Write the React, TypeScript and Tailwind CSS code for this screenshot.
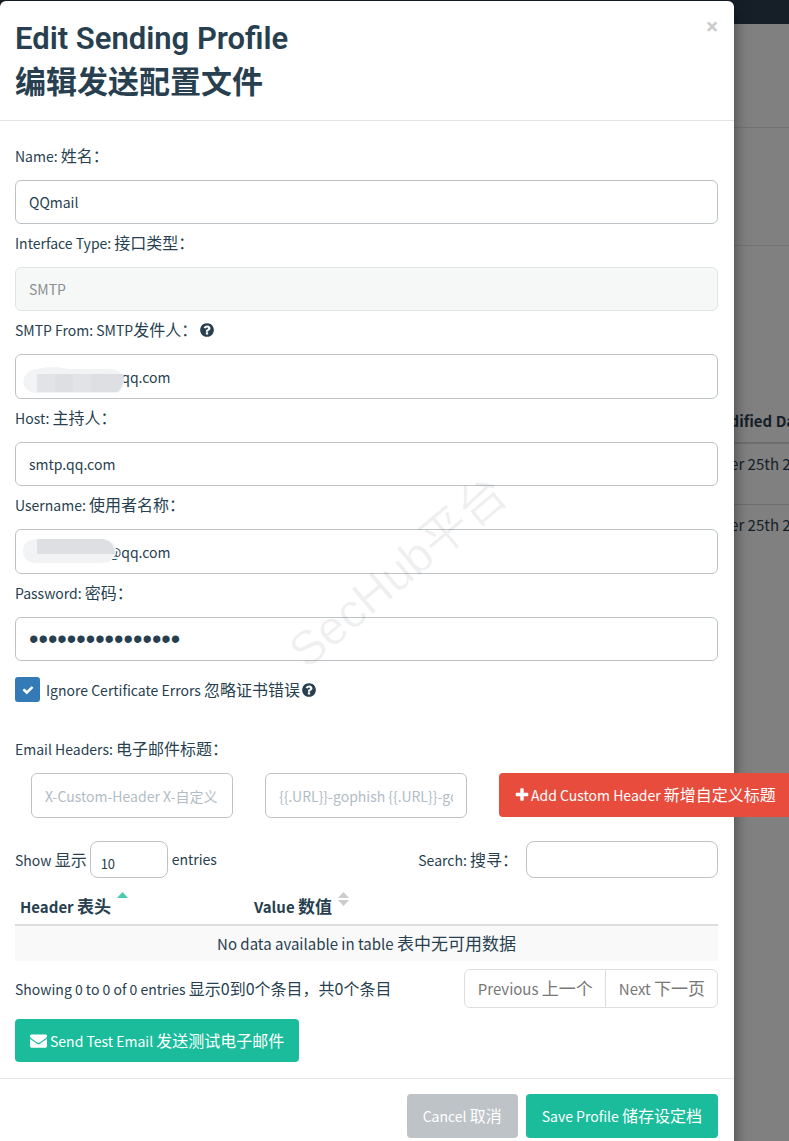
import React, { useState } from 'react'

const iconPaths = {
    plus: "M1600 736v192q0 40-28 68t-68 28h-416v416q0 40-28 68t-68 28H800q-40 0-68-28t-28-68v-416H288q-40 0-68-28t-28-68V736q0-40 28-68t68-28h416V224q0-40 28-68t68-28h192q40 0 68 28t28 68v416h416q40 0 68 28t28 68z",
    check: "M1671 566q0 40-28 68l-724 724-136 136q-28 28-68 28t-68-28l-136-136-362-362q-28-28-28-68t28-68l136-136q28-28 68-28t68 28l294 295 656-657q28-28 68-28t68 28l136 136q28 28 28 68z",
    envelope: "M1792 710v794q0 66-47 113t-113 47H160q-66 0-113-47T0 1504V710q44 49 101 87 362 246 497 345 57 42 92.5 65.5t94.5 48 110 24.5h2q51 0 110-24.5t94.5-48 92.5-65.5q170-123 498-345 57-39 100-87zm0-294q0 79-49 151t-122 123q-376 261-468 325-10 7-42.5 31t-54 38.5-52 32.5-57.5 27-50 9h-2q-23 0-50-9t-57.5-27-52-32.5-54-38.5-42.5-31q-91-64-262-182.5T172 690q-62-42-117-115.5T0 438q0-78 41.5-130T160 256h1472q65 0 112.5 47t47.5 113z",
    question: "M1024 1376v-192q0-14-9-23t-23-9H800q-14 0-23 9t-9 23v192q0 14 9 23t23 9h192q14 0 23-9t9-23zm256-672q0-88-55.5-163t-138.5-116-170-41q-243 0-371 213-15 24 8 42l132 100q7 6 19 6 16 0 25-12 53-68 86-92 34-24 86-24 48 0 85.5 26t37.5 59q0 38-20 61t-68 45q-63 28-115.5 86.5T768 1020v36q0 14 9 23t23 9h192q14 0 23-9t9-23q0-19 21.5-49.5T1100 957q32-18 49-28.5t46-35 44.5-48 28-60.5 12.5-81zm384 192q0 209-103 385.5T1281.5 1561 896 1664t-385.5-103T231 1281.5 128 896t103-385.5T510.5 231 896 128t385.5 103T1561 510.5 1664 896z",
};

const Icon: React.FC<{ name: keyof typeof iconPaths; className: string }> = ({ name, className }) => (
    <svg viewBox="0 0 1792 1792" fill="currentColor" aria-hidden="true" className={`inline-block shrink-0 ${className}`}>
        <path d={iconPaths[name]} />
    </svg>
);

const inputClass = "block w-full rounded-md border border-[#bdc3c7] bg-white px-[13px] text-[14px] text-[#283f50] outline-none placeholder:text-[#b2bcc5] disabled:border-[#dfe4e5] disabled:bg-[#f6f8f8] disabled:text-[#8b8f90]";

// English and Chinese parts run in one line at their own sizes
const Bi: React.FC<{ en: string; zh: string; large?: boolean; tight?: boolean }> = ({ en, zh, large, tight }) => (
    <span className="inline-block whitespace-nowrap pb-0.5">
        <span className={large ? "text-[15px]" : "text-[14px]"}>{en}{tight ? "" : " "}</span>
        <span className={large ? "text-[17px]" : "text-[16px]"}>{zh}</span>
    </span>
);

interface FieldProps {
    id: string;
    en: string;
    zh: string;
    tight?: boolean;
    help?: boolean;
    children: React.ReactNode;
}

const Field: React.FC<FieldProps> = ({ id, en, zh, tight, help, children }) => (
    <div className="mb-[7px]">
        <label htmlFor={id} className="mb-3 flex h-6 items-center leading-6">
            <Bi en={en} zh={zh} tight={tight} />
            {help && <Icon name="question" className="ml-0.5 h-4 w-4" />}
        </label>
        {children}
    </div>
);

const BackgroundPage = () => (
    <div className="absolute inset-0 overflow-hidden bg-[#808080] text-[#161f28]" aria-hidden="true">
        <div className="h-6 bg-[#161f28]" />
        <div className="h-[104px] border-b border-[#737373]" />
        <div className="h-[118px] border-b border-[#737373]" />
        <div className="mt-[155px] flex flex-col">
            <div className="flex h-[43px] justify-end border-b-2 border-[#6e6e6e]">
                <div className="w-[116px] whitespace-nowrap pt-2 text-[15px] font-bold leading-6">Last Modified Date</div>
            </div>
            <div className="flex h-[61px] justify-end border-b border-[#6e6e6e]">
                <div className="w-[118px] whitespace-nowrap pt-2 text-[15px] leading-6">November 25th 2024</div>
            </div>
            <div className="flex h-[61px] justify-end">
                <div className="w-[118px] whitespace-nowrap pt-2 text-[15px] leading-6">November 25th 2024</div>
            </div>
        </div>
    </div>
);

const App: React.FC = () => {
    const [ignoreErrors, setIgnoreErrors] = useState(true);

    return (
        <div className="relative min-h-screen overflow-hidden font-['Noto_Sans_CJK_SC',sans-serif] text-[#283f50]">
            <BackgroundPage />

            {/* Modal */}
            <div role="dialog" aria-labelledby="modal-title" className="relative mr-[55px] mt-px rounded-md bg-white shadow-[0_5px_15px_rgba(0,0,0,0.5)]">
                <div className="flex items-start justify-between border-b border-[#e5e5e5] px-4 pb-[15px] pl-[15px] pt-4">
                    <h4 id="modal-title" className="font-['Roboto','Noto_Sans_CJK_SC',sans-serif] text-[31px] font-semibold leading-[44px]">
                        Edit Sending Profile
                        <br />
                        <span className="font-bold">编辑发送配置文件</span>
                    </h4>
                    <button type="button" aria-label="Close" className="font-['Roboto',sans-serif] text-[22px] font-bold leading-5 text-[#ccc]">×</button>
                </div>

                <div className="pl-[15px] pr-4 pt-[23px]">
                    <Field id="name" en="Name:" zh="姓名：">
                        <input id="name" type="text" defaultValue="QQmail" className={`h-11 ${inputClass}`} />
                    </Field>
                    <Field id="interface" en="Interface Type:" zh="接口类型：">
                        <input id="interface" type="text" value="SMTP" disabled className={`h-11 ${inputClass}`} />
                    </Field>
                    <Field id="from" en="SMTP From: SMTP" zh="发件人：" tight help>
                        <div className="relative">
                            <input id="from" type="text" defaultValue="@qq.com" className={`h-[45px] pl-[92px]! ${inputClass}`} />
                            <svg className="absolute left-2 top-3" width="102" height="28" viewBox="0 0 102 28" aria-hidden="true">
                                <path d="M13 27C-4 26-4 5 14 3Q30-1 46 3H88Q101 5 101 14Q101 26 93 27Z" fill="#f2f3f5" />
                                <path d="M14 8H100Q103 16 95 26H14Z" fill="#dddfe3" />
                                <path d="M14 8H32V26H14ZM50 8H68V26H50Z" fill="#e1e3e6" />
                            </svg>
                        </div>
                    </Field>
                    <Field id="host" en="Host:" zh="主持人：">
                        <input id="host" type="text" defaultValue="smtp.qq.com" className={`h-11 ${inputClass}`} />
                    </Field>
                    <Field id="username" en="Username:" zh="使用者名称：">
                        <div className="relative">
                            <input id="username" type="text" defaultValue="@qq.com" className={`h-[45px] pl-[92px]! ${inputClass}`} />
                            <svg className="absolute left-2 top-[9px]" width="94" height="26" viewBox="0 0 94 26" aria-hidden="true">
                                <path d="M13 1H80Q93 3 93 13Q92 24 80 25H13Q0 24 0 13Q0 2 13 1Z" fill="#f2f3f4" />
                                <path d="M14 1H80Q91 3 92 16H14Z" fill="#dddfe3" />
                            </svg>
                        </div>
                    </Field>
                    <Field id="password" en="Password:" zh="密码：">
                        <input id="password" type="password" defaultValue="sixteencharacter" className={`h-11 font-['Liberation_Sans',sans-serif] text-[27px]! ${inputClass}`} />
                    </Field>

                    <label className="mt-4 flex h-[25px] items-center">
                        <input type="checkbox" checked={ignoreErrors} onChange={e => setIgnoreErrors(e.target.checked)} className="peer sr-only" />
                        <span className="mr-[6px] flex h-[25px] w-[25px] items-center justify-center rounded-[3px] bg-[#337ab7] text-white">
                            {ignoreErrors && <Icon name="check" className="h-3 w-3" />}
                        </span>
                        <Bi en="Ignore Certificate Errors" zh="忽略证书错误" />
                        <Icon name="question" className="ml-px h-4 w-4" />
                    </label>

                    <div className="mt-[35px] flex h-6 items-center leading-6">
                        <Bi en="Email Headers:" zh="电子邮件标题：" />
                    </div>
                    <div className="ml-4 mt-3 flex items-start">
                        <input type="text" aria-label="Header" placeholder="X-Custom-Header X-自定义" className={`mr-8 h-[45px] w-[202px]! shrink-0 ${inputClass}`} />
                        <input type="text" aria-label="Value" placeholder="{{.URL}}-gophish {{.URL}}-gophish" className={`mr-8 h-[45px] w-[202px]! shrink-0 ${inputClass}`} />
                        <button type="button" className="flex h-11 shrink-0 items-center rounded bg-[#e74c3c] px-[15px] text-white">
                            <Icon name="plus" className="mr-px h-4 w-4" />
                            <Bi en="Add Custom Header" zh="新增自定义标题" />
                        </button>
                    </div>

                    {/* Headers table */}
                    <div className="mt-[23px] flex h-[37px] items-center justify-between">
                        <label className="flex items-center">
                            <Bi en="Show" zh="显示" />
                            <select className="ml-[3px] mr-1 h-[37px] w-[78px] appearance-none rounded-lg border border-[#bdc3c7] bg-white px-[10px] pt-2 text-[13px]" defaultValue="10">
                                <option>10</option>
                                <option>25</option>
                                <option>50</option>
                            </select>
                            <span className="text-[14px]">entries</span>
                        </label>
                        <label className="flex items-center">
                            <Bi en="Search:" zh="搜寻：" />
                            <input type="search" className="ml-2 h-[37px] w-48 rounded-lg border border-[#bdc3c7] px-3 text-[14px] outline-none" />
                        </label>
                    </div>
                    <table className="mt-[9px] w-full table-fixed border-collapse">
                        <thead>
                            <tr className="h-[38px] border-b-2 border-[#ddd] text-left leading-6">
                                <th className="w-[234px] px-[5px] pb-0 pt-1">
                                    <span className="relative inline-block">
                                        <Bi en="Header" zh="表头" large />
                                        <svg className="absolute -right-[17px] -top-0.5" width="11" height="14" viewBox="0 0 11 14" aria-hidden="true">
                                            <path d="M0 6L5.5 0L11 6Z" fill="#48c9b0" />
                                        </svg>
                                    </span>
                                </th>
                                <th className="px-[5px] pb-0 pt-1">
                                    <span className="relative inline-block">
                                        <Bi en="Value" zh="数值" large />
                                        <svg className="absolute -right-[17px] -top-0.5" width="11" height="14" viewBox="0 0 11 14" aria-hidden="true">
                                            <path d="M0 6L5.5 0L11 6ZM0 8H11L5.5 14Z" fill="#ccc" />
                                        </svg>
                                    </span>
                                </th>
                            </tr>
                        </thead>
                        <tbody>
                            <tr className="h-9 bg-[#f9f9f9] text-center leading-6">
                                <td colSpan={2} className="pt-0.5">
                                    <Bi en="No data available in table" zh="表中无可用数据" large />
                                </td>
                            </tr>
                        </tbody>
                    </table>
                    <div className="mt-2 flex h-[39px] items-center justify-between">
                        <Bi en="Showing 0 to 0 of 0 entries" zh="显示0到0个条目，共0个条目" />
                        <div className="flex h-[39px] rounded-md border border-[#ddd] text-[#777]">
                            <button type="button" className="border-r border-[#ddd] pl-[13px] pr-3"><Bi en="Previous" zh="上一个" large /></button>
                            <button type="button" className="pl-[13px] pr-3"><Bi en="Next" zh="下一页" large /></button>
                        </div>
                    </div>
                    <button type="button" className="mt-[11px] flex h-[43px] items-center rounded bg-[#1abc9c] px-[15px] text-white">
                        <Icon name="envelope" className="mr-[3px] h-[17px] w-[17px]" />
                        <Bi en="Send Test Email" zh="发送测试电子邮件" />
                    </button>
                </div>

                <div className="mt-4 flex justify-end gap-2 border-t border-[#e5e5e5] px-4 pb-4 pt-[15px]">
                    <button type="button" className="h-11 rounded bg-[#bdc3c7] px-4 text-white"><Bi en="Cancel" zh="取消" /></button>
                    <button type="button" className="h-11 rounded bg-[#1abc9c] px-4 text-white"><Bi en="Save Profile" zh="储存设定档" /></button>
                </div>

                {/* Watermark */}
                <div className="pointer-events-none absolute inset-x-0 top-[535px] flex justify-center pl-[62px]" aria-hidden="true">
                    <span className="-rotate-40 whitespace-nowrap font-['Liberation_Sans','Noto_Sans_CJK_SC',sans-serif] text-[48px] text-black/6">SecHub平台</span>
                </div>
            </div>
        </div>
    )
}

export default App
